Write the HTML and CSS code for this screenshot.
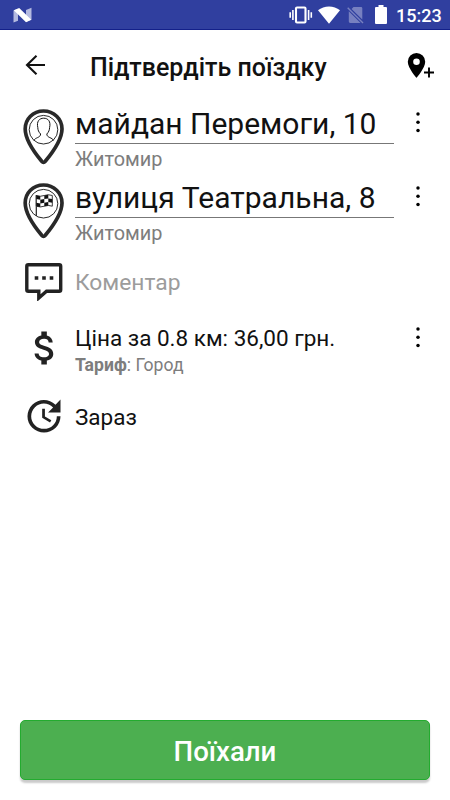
FILE: index.html
```html
<!DOCTYPE html>
<html lang="uk">
<head>
<meta charset="utf-8">
<meta name="viewport" content="width=device-width">
<title>Підтвердіть поїздку</title>
<link rel="stylesheet" href="styles.css">
</head>
<body>
<div class="statusbar">
  <svg class="brand" width="20" height="16" viewBox="0 0 20 16"><path fill="#b4bae0" d="M.5 3.500 5 1.800v12L.5 15.500zM13 3l5.500-2.200v12L13 15z"/><path fill="#fff" d="M.8 3.200 6.200 1 18.300 12.800 13 15.200z"/></svg>
  <div class="indicators">
    <svg width="24" height="18" viewBox="0 0 24 18"><g fill="none" stroke="#fff"><rect x="7" y="1.500" width="9.500" height="15" rx="1" stroke-width="2.100"/><path d="M3.900 4v10M19.600 4v10M1.200 6.300v5.500M22.300 6.300v5.500" stroke-width="1.600"/></g></svg>
    <svg class="wifi" width="22" height="18" viewBox="0 0 22 18"><path fill="#fff" d="M11 17.700 0 4.200C6-.9 16-.9 22 4.200z"/></svg>
    <svg class="sim" width="17" height="18" viewBox="0 0 17 18"><path fill="#7780c0" d="M6.500 1H14q1.300 0 1.300 1.300v11.300L4.600 2.900zM1.800 5.200 13.600 17H3.200q-1.400 0-1.400-1.400z"/><path d="M.7 1.700 16 17" stroke="#7780c0" stroke-width="1.400"/></svg>
    <svg class="battery" width="12" height="20" viewBox="0 0 12 20"><path fill="#fff" d="M3.500 0h5v2H11q1 0 1 1v15q0 1-1 1H1q-1 0-1-1V3q0-1 1-1h2.500z"/></svg>
    <span class="clock">15:23</span>
  </div>
</div>
<header class="toolbar">
  <svg width="22" height="22" viewBox="0 0 22 22"><path d="M20 11H2M11.500 1.800 2 11l9.500 9.200" fill="none" stroke="#111" stroke-width="2.100"/></svg>
  <h1>Підтвердіть поїздку</h1>
  <svg class="addpin" width="28" height="27" viewBox="0 0 28 27"><path fill="#000" fill-rule="evenodd" d="M9.500 0A8.700 8.700 0 0 0 .8 8.700C.8 15 9.500 24.800 9.500 24.800S18.200 15 18.200 8.700A8.700 8.700 0 0 0 9.500 0zm0 5.400a3.300 3.300 0 1 1 0 6.600 3.300 3.300 0 0 1 0-6.600z"/><path d="M17 19.500h10M22 14.500v10" stroke="#000" stroke-width="1.900"/></svg>
</header>
<main>
  <section class="row stop">
    <svg class="pin" width="42" height="56" viewBox="0 0 42 56"><path d="M20.500 2C10 2 2.200 10 2.200 20c0 11 8.800 23 16.500 32.300q1.800 2 3.600 0C30 43 39 31 39 20 39 10 31 2 20.500 2z" fill="#fff" stroke="#292929" stroke-width="3.700"/><g fill="none" stroke="#111"><circle cx="20.500" cy="20.700" r="14.300" stroke-width=".9"/><path d="M11 31.500c1-3.200 6.500-2.500 6.600-6.500-2-2-2.700-4-2.800-6.500-1.400-6 1.500-9.300 5.900-9.300s7.300 3.300 5.900 9.300c-.1 2.500-.8 4.500-2.800 6.500.1 4 5.600 3.300 6.600 6.500" stroke-width="1"/></g></svg>
    <div class="text"><div class="address">майдан Перемоги, 10</div><div class="city">Житомир</div></div>
    <svg class="more" width="6" height="22" viewBox="0 0 6 22"><circle cx="3" cy="3" r="1.750"/><circle cx="3" cy="11.300" r="1.750"/><circle cx="3" cy="19.600" r="1.750"/></svg>
  </section>
  <section class="row stop">
    <svg class="pin" width="42" height="56" viewBox="0 0 42 56"><path d="M20.500 2C10 2 2.200 10 2.200 20c0 11 8.800 23 16.500 32.300q1.800 2 3.600 0C30 43 39 31 39 20 39 10 31 2 20.500 2z" fill="#fff" stroke="#292929" stroke-width="3.700"/><circle cx="20.500" cy="20.700" r="14.300" fill="none" stroke="#111" stroke-width=".9"/><path d="M13.300 12v21" stroke="#222" stroke-width="1.200"/><path d="M13.300 12.500q4 1.500 8 0t8 0v10.700q-4-1.500-8 0t-8 0z" fill="#fff" stroke="#222" stroke-width=".9"/><path fill="#111" d="M13.300 12.500l4 .7v3.600l-4-.7zM21.300 12.500l4-.7v3.600l-4 .7zM17.300 16.800l4-.7v3.600l-4 .7zM25.300 15.400l4 .7v3.600l-4-.7zM13.300 19.700l4 .7v3.500l-4-.7zM21.300 19.700l4-.7v3.500l-4 .7z"/></svg>
    <div class="text"><div class="address second">вулиця Театральна, 8</div><div class="city">Житомир</div></div>
    <svg class="more" width="6" height="22" viewBox="0 0 6 22"><circle cx="3" cy="3" r="1.750"/><circle cx="3" cy="11.300" r="1.750"/><circle cx="3" cy="19.600" r="1.750"/></svg>
  </section>
  <section class="row comment">
    <svg width="38" height="38" viewBox="0 0 38 38"><path d="M3.300 1.700h30.900q1.500 0 1.500 1.500v23.600q0 1.500-1.500 1.500H21.500l-7.700 6.700v-6.700H3.300q-1.500 0-1.500-1.500V3.200q0-1.500 1.500-1.500z" fill="none" stroke="#222" stroke-width="3.400"/><path fill="#222" d="M9.700 13.200h3.600v3.600H9.700zM17.200 13.200h3.600v3.600h-3.600zM24.700 13.200h3.600v3.600h-3.600z"/></svg>
    <div class="placeholder">Коментар</div>
  </section>
  <section class="row fare">
    <svg class="dollar" width="44" height="44" viewBox="0 0 24 24"><path fill="#222" d="M11.800 10.900c-2.270-.59-3-1.200-3-2.150 0-1.090 1.010-1.850 2.700-1.850 1.780 0 2.440.85 2.500 2.100h2.210c-.07-1.720-1.120-3.300-3.210-3.810V3h-3v2.160c-1.940.42-3.500 1.680-3.500 3.610 0 2.310 1.910 3.460 4.700 4.130 2.500.6 3 1.480 3 2.410 0 .69-.49 1.790-2.700 1.790-2.060 0-2.870-.92-2.980-2.100h-2.200c.12 2.190 1.760 3.420 3.680 3.830V21h3v-2.150c1.950-.37 3.500-1.500 3.500-3.550 0-2.840-2.430-3.810-4.700-4.400z"/></svg>
    <div class="text"><div class="price">Ціна за 0.8 км: 36,00 грн.</div><div class="tariff"><b>Тариф</b>: Город</div></div>
    <svg class="more" width="6" height="22" viewBox="0 0 6 22"><circle cx="3" cy="3" r="1.750"/><circle cx="3" cy="11.300" r="1.750"/><circle cx="3" cy="19.600" r="1.750"/></svg>
  </section>
  <section class="row time">
    <svg width="44" height="44" viewBox="0 0 24 24"><path fill="#222" d="M21 10.120h-6.780l2.740-2.820c-2.730-2.700-7.150-2.800-9.880-.1-2.730 2.710-2.730 7.080 0 9.790 2.730 2.710 7.150 2.710 9.880 0C18.320 15.650 19 14.080 19 12.100h2c0 1.980-.88 4.550-2.640 6.290-3.510 3.480-9.210 3.480-12.720 0-3.500-3.470-3.530-9.110-.02-12.580 3.510-3.470 9.140-3.470 12.650 0L21 3v7.120zM12.500 8v4.250l3.500 2.080-.72 1.210L11 13V8h1.500z"/></svg>
    <div class="price">Зараз</div>
  </section>
</main>
<footer><button>Поїхали</button></footer>
</body>
</html>
```
FILE: styles.css
```css
* { box-sizing: border-box; }
body {
  margin: 0;
  width: 450px;
  height: 800px;
  display: flex;
  flex-direction: column;
  background: #fff;
  color: #111;
  font-family: Roboto, "Liberation Sans", sans-serif;
  overflow: hidden;
}
svg { display: block; flex: none; }
.statusbar {
  height: 30px;
  flex: none;
  display: flex;
  justify-content: space-between;
  align-items: center;
  padding: 0 10px 0 13px;
  background: #303f9f;
  border-bottom: 1px solid #13208a;
}
.brand { margin-top: 1px; }
.indicators { display: flex; align-items: center; color: #fff; }
.wifi { margin-left: 5px; }
.sim { margin-left: 7px; }
.battery { margin-left: 11px; margin-top: 1px; }
.clock { margin-left: 9px; padding-top: 2px; font-size: 18px; font-weight: 500; line-height: 28px; width: 44px; white-space: nowrap; }
.toolbar {
  height: 73px;
  flex: none;
  display: flex;
  align-items: center;
  padding: 0 15px 3px 25px;
}
h1 { flex: 1; margin: 5px 0 0 43px; font-size: 25px; line-height: 30px; font-weight: 500; }
.addpin { margin-top: 2px; }
main { flex: 1; padding: 0 29px 0 23px; }
.row { display: flex; align-items: flex-start; white-space: nowrap; }
.row > .more { margin-left: auto; }
.stop { height: 74px; padding-top: 6px; }
.stop .text { width: 319px; margin-left: 10px; margin-top: -2px; }
.stop .more { margin-top: 2px; }
.address { height: 37px; line-height: 33px; font-size: 30px; border-bottom: 1px solid #777; }
.second { letter-spacing: .03px; }
.city { font-size: 19.9px; line-height: 31px; color: #7d7d7d; }
.comment { height: 75px; padding: 12px 0 0 2px; }
.placeholder { margin: 4px 0 0 12px; font-size: 22.8px; line-height: 32px; color: #9c9c9c; }
.fare { height: 69px; }
.fare .text { margin-left: 8px; margin-top: -1px; }
.fare .more { margin-top: 0; }
.price { font-size: 22.5px; line-height: 26px; }
.tariff { font-size: 17.6px; line-height: 28px; color: #7d7d7d; }
.time svg { margin: -1px 0 0 -1px; }
.time .price { margin: 9px 0 0 9px; }
footer { flex: none; padding: 0 20px 20px; }
button {
  display: block;
  width: 100%;
  height: 60px;
  padding: 3px 0 0;
  border: 1px solid #23ab2f;
  border-radius: 5px;
  background: #4caf50;
  box-shadow: 0 3px 2px #00000035;
  color: #fff;
  font: 500 27.6px/1 Roboto, sans-serif;
}
```
